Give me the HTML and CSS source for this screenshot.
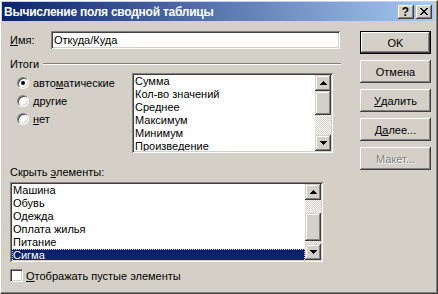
FILE: index.html
```html
<!DOCTYPE html>
<html lang="ru">
<head>
    <meta charset="UTF-8">
    <meta name="viewport" content="width=device-width, initial-scale=1.0">
    <title>Вычисление поля сводной таблицы</title>
    <link rel="stylesheet" href="styles.css">
</head>
<body>
    <div class="window">
        <div class="titlebar">
            <span class="title">Вычисление поля сводной таблицы</span>
            <div class="caption-buttons">
                <div class="caption-btn help">?</div>
                <div class="caption-btn">
                    <svg width="8" height="7" viewBox="0 0 8 7"><path d="M0 0h2v1h-2zM6 0h2v1h-2zM1 1h2v1h-2zM5 1h2v1h-2zM2 2h4v1h-4zM3 3h2v1h-2zM2 4h4v1h-4zM1 5h2v1h-2zM5 5h2v1h-2zM0 6h2v1h-2zM6 6h2v1h-2z"/></svg>
                </div>
            </div>
        </div>

        <div class="content">
            <div class="main">
                <div class="name-row">
                    <span class="name-label"><u>И</u>мя:</span>
                    <div class="field">Откуда/Куда</div>
                </div>

                <div class="group-title">
                    <span>Итоги</span>
                    <div class="etched"></div>
                </div>

                <div class="group">
                    <div class="radios">
                        <div class="radio-row"><span class="radio checked"></span>авто<u>м</u>атические</div>
                        <div class="radio-row"><span class="radio"></span><u>д</u>ругие</div>
                        <div class="radio-row"><span class="radio"></span><u>н</u>ет</div>
                    </div>
                    <div class="listbox summary">
                        <div class="items">
                            <div class="item">Сумма</div>
                            <div class="item">Кол-во значений</div>
                            <div class="item">Среднее</div>
                            <div class="item">Максимум</div>
                            <div class="item">Минимум</div>
                            <div class="item">Произведение</div>
                        </div>
                        <div class="scrollbar">
                            <div class="sb-btn"><svg width="7" height="4" viewBox="0 0 7 4"><path d="M3 0h1v1h1v1h1v1h1v1H0V3h1V2h1V1h1z"/></svg></div>
                            <div class="thumb thumb-a"></div>
                            <div class="track-fill"></div>
                            <div class="sb-btn"><svg width="7" height="4" viewBox="0 0 7 4"><path d="M0 0h7v1H6v1H5v1H4v1H3V3H2V2H1V1H0z"/></svg></div>
                        </div>
                    </div>
                </div>

                <div class="hide-label">Скрыть <u>э</u>лементы:</div>
                <div class="listbox hidden-items">
                    <div class="items">
                        <div class="item">Машина</div>
                        <div class="item">Обувь</div>
                        <div class="item">Одежда</div>
                        <div class="item">Оплата жилья</div>
                        <div class="item">Питание</div>
                        <div class="item selected">Сигма</div>
                    </div>
                    <div class="scrollbar">
                        <div class="sb-btn"><svg width="7" height="4" viewBox="0 0 7 4"><path d="M3 0h1v1h1v1h1v1h1v1H0V3h1V2h1V1h1z"/></svg></div>
                        <div class="track-top"></div>
                        <div class="thumb thumb-b"></div>
                        <div class="track-fill"></div>
                        <div class="sb-btn"><svg width="7" height="4" viewBox="0 0 7 4"><path d="M0 0h7v1H6v1H5v1H4v1H3V3H2V2H1V1H0z"/></svg></div>
                    </div>
                </div>

                <div class="check-row"><span class="checkbox"></span><u>О</u>тображать пустые элементы</div>
            </div>

            <div class="buttons">
                <div class="btn default">OK</div>
                <div class="btn">Отмена</div>
                <div class="btn"><u>У</u>далить</div>
                <div class="btn">Д<u>а</u>лее...</div>
                <div class="btn disabled">Макет...</div>
            </div>
        </div>
    </div>
</body>
</html>
```

FILE: styles.css
```css
body {
    margin: 0;
    background: #d4d0c8;
    font-family: "Liberation Sans", Arial, sans-serif;
    font-size: 11px;
    color: #000;
}
.window {
    width: 438px;
    height: 294px;
    box-sizing: border-box;
    background: #d4d0c8;
    border-top: 1px solid #fff;
    border-left: 1px solid #fff;
    border-right: 1px solid #404040;
    border-bottom: 1px solid #404040;
    box-shadow: inset -1px -1px #808080;
    padding: 1px 3px 2px 1px;
    display: flex;
    flex-direction: column;
}
.titlebar {
    height: 19px;
    flex: none;
    display: flex;
    align-items: center;
    padding: 0 2px;
    background: linear-gradient(to right, #0a246a, #a6caf0);
    color: #fff;
    font-weight: bold;
    font-size: 12px;
}
.title {
    flex: 1;
    white-space: nowrap;
    letter-spacing: -0.25px;
}
.caption-buttons {
    display: flex;
    gap: 2px;
}
.caption-btn {
    width: 16px;
    height: 14px;
    box-sizing: border-box;
    background: #d4d0c8;
    box-shadow: inset -1px -1px #404040, inset 1px 1px #fff, inset -2px -2px #808080;
    display: flex;
    align-items: center;
    justify-content: center;
    color: #000;
}
.caption-btn.help {
    font-size: 12px;
    line-height: 14px;
    padding-right: 1px;
}
.caption-btn svg {
    margin-right: 1px;
}

.content {
    display: flex;
    padding: 10px 0 0 8px;
}
.main {
    width: 331px;
    display: flex;
    flex-direction: column;
}
.name-row {
    display: flex;
    height: 18px;
    align-items: center;
}
.name-label {
    width: 41px;
}
.field {
    flex: 1;
    margin-right: 1px;
    height: 18px;
    line-height: 18px;
    padding-left: 3px;
    background: #fff;
    box-shadow: inset 1px 1px #808080, inset -1px -1px #fff, inset 2px 2px #404040, inset -2px -2px #d4d0c8;
}
.group-title {
    margin-top: 8px;
    height: 13px;
    display: flex;
    align-items: center;
}
.etched {
    flex: 1;
    margin-left: 4px;
    border-top: 1px solid #808080;
    border-bottom: 1px solid #fff;
}
.group {
    display: flex;
    margin-top: 3px;
}
.radios {
    width: 122px;
    padding-top: 3px;
    display: flex;
    flex-direction: column;
    gap: 5px;
}
.radio-row {
    height: 13px;
    display: flex;
    align-items: center;
}
.radio {
    position: relative;
    width: 12px;
    height: 12px;
    box-sizing: border-box;
    margin: 0 4px 0 7px;
    border-radius: 50%;
    background: #fff;
    border: 1px solid;
    border-color: #808080 #fff #fff #808080;
    box-shadow: inset 1px 1px #404040, inset -1px -1px #d4d0c8;
}
.radio.checked::after {
    content: "";
    position: absolute;
    left: 3px;
    top: 3px;
    width: 4px;
    height: 4px;
    border-radius: 50%;
    background: #000;
}

.listbox {
    display: flex;
    box-sizing: border-box;
    padding: 2px;
    background: #fff;
    box-shadow: inset 1px 1px #808080, inset -1px -1px #fff, inset 2px 2px #404040, inset -2px -2px #d4d0c8;
}
.summary {
    width: 201px;
    height: 80px;
}
.hidden-items {
    width: 313px;
    height: 80px;
    margin-top: 3px;
}
.items {
    flex: 1;
    overflow: hidden;
}
.item {
    height: 13px;
    line-height: 13px;
    padding-left: 1px;
    white-space: nowrap;
}
.item.selected {
    background: #0a246a;
    color: #fff;
    outline: 1px dotted #e8d48a;
    outline-offset: -1px;
}
.scrollbar {
    width: 16px;
    display: flex;
    flex-direction: column;
    background: repeating-conic-gradient(#fff 0 25%, #d4d0c8 0 50%) 0 0 / 2px 2px;
}
.sb-btn,
.thumb {
    flex: none;
    background: #d4d0c8;
    box-shadow: inset -1px -1px #404040, inset 1px 1px #d4d0c8, inset -2px -2px #808080, inset 2px 2px #fff;
}
.sb-btn {
    height: 16px;
    display: flex;
    align-items: center;
    justify-content: center;
}
.thumb-a {
    height: 24px;
}
.thumb-b {
    height: 28px;
}
.track-top {
    height: 13px;
}
.track-fill {
    flex: 1;
}
.hide-label {
    margin-top: 13px;
    line-height: 13px;
}
.check-row {
    margin-top: 7px;
    height: 13px;
    display: flex;
    align-items: center;
}
.checkbox {
    width: 13px;
    height: 13px;
    box-sizing: border-box;
    margin-right: 3px;
    background: #fff;
    border: 1px solid;
    border-color: #808080 #fff #fff #808080;
    box-shadow: inset 1px 1px #404040, inset -1px -1px #d4d0c8;
}

.buttons {
    margin-left: 19px;
    display: flex;
    flex-direction: column;
    gap: 6px;
}
.btn {
    width: 71px;
    height: 23px;
    box-sizing: border-box;
    display: flex;
    align-items: center;
    justify-content: center;
    background: #d4d0c8;
    box-shadow: inset -1px -1px #404040, inset 1px 1px #fff, inset -2px -2px #808080, inset 2px 2px #d4d0c8;
}
.btn.default {
    border: 1px solid #000;
}
.btn.disabled {
    color: #808080;
    text-shadow: 1px 1px #fff;
}
```
